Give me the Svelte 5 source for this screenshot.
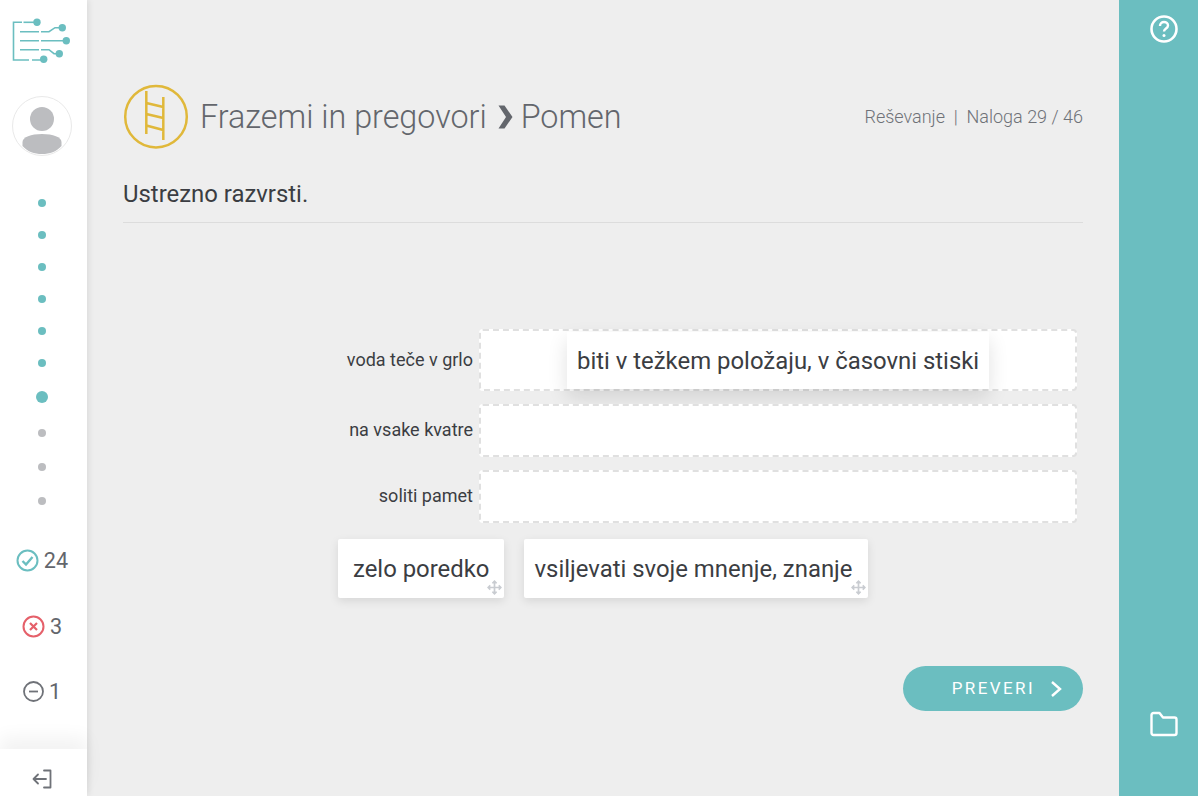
<script lang="ts">
  const doneDots = [0, 1, 2, 3, 4, 5];
  const todoDots = [0, 1, 2];
  const rows = [
    { label: "voda teče v grlo", tall: true },
    { label: "na vsake kvatre", tall: false },
    { label: "soliti pamet", tall: false },
  ];
  const chips = ["zelo poredko", "vsiljevati svoje mnenje, znanje"];
</script>

<div class="page">
  <aside class="side">
    <svg class="logo" width="60" height="46" viewBox="0 0 60 46" fill="none" stroke="#6bbec0" stroke-width="1.6">
      <path d="M12 4.300H3.500V42H19M22 42H33" />
      <path d="M13.500 4.300H27" />
      <path d="M10 13.700H29M31 13.700H39L45 9.700H52" />
      <path d="M10 22.700H29M31 22.700H56" />
      <path d="M10 31.700H29M31 31.700H39L44 35.700H49" />
      <g fill="#6bbec0" stroke="none">
        <circle cx="27" cy="4.300" r="3.700" />
        <circle cx="52.300" cy="9.700" r="3.700" />
        <circle cx="56.300" cy="22.700" r="3.700" />
        <circle cx="49.300" cy="35.700" r="3.700" />
        <circle cx="33.700" cy="41.300" r="3.700" />
      </g>
    </svg>
    <div class="avatar">
      <svg width="60" height="60" viewBox="0 0 60 60">
        <circle cx="30" cy="23" r="12" fill="#bcbdc0" />
        <path d="M10.500 46C10.500 41 19 38 30 38S49.500 41 49.500 46V50C44 56 38 58 30 58S16 56 10.500 50Z" fill="#bcbdc0" />
      </svg>
    </div>
    <div class="dots">
      {#each doneDots as d (d)}
        <span class="dot"></span>
      {/each}
      <span class="dot dot--current"></span>
      {#each todoDots as d (d)}
        <span class="dot dot--todo"></span>
      {/each}
    </div>
    <div class="stats">
      <div class="stat">
        <svg width="23" height="23" viewBox="0 0 23 23" fill="none" stroke="#6bbec0" stroke-width="2">
          <circle cx="11.500" cy="11.500" r="10" />
          <path d="M6.500 12l3.500 3.500L16.500 8" stroke-width="2.400" />
        </svg>
        <span>24</span>
      </div>
      <div class="stat">
        <svg width="23" height="23" viewBox="0 0 23 23" fill="none" stroke="#e5606a" stroke-width="2">
          <circle cx="11.500" cy="11.500" r="10" />
          <path d="M8 8l7 7M15 8l-7 7" stroke-width="2.200" />
        </svg>
        <span>3</span>
      </div>
      <div class="stat stat--last">
        <svg width="21" height="21" viewBox="0 0 21 21" fill="none" stroke="#6f7278" stroke-width="1.800">
          <circle cx="10.500" cy="10.500" r="9.500" />
          <path d="M6 10.500h9" />
        </svg>
        <span>1</span>
      </div>
    </div>
    <div class="logout">
      <svg width="22" height="22" viewBox="0 0 22 22" fill="none" stroke="#6f7278" stroke-width="1.800" stroke-linecap="round" stroke-linejoin="round">
        <path d="M13 2.500h6.500v17H13" />
        <path d="M15 11H2.500M7 6.500L2.500 11 7 15.500" />
      </svg>
    </div>
  </aside>

  <main class="main">
    <header class="head">
      <svg class="badge" width="66" height="66" viewBox="0 0 66 66" fill="none" stroke="#e0b83a" stroke-width="2.500">
        <circle cx="33" cy="32.700" r="30.800" />
        <path d="M23.300 7V50M40.300 13V56M23.300 19l17 4M23.300 30l17 4M23.300 41.500l17 4.500" />
      </svg>
      <h1 class="crumbs">
        <span>Frazemi in pregovori</span>
        <svg width="15" height="24" viewBox="0 0 15 24" fill="#63666c">
          <path d="M0.500 0.500H6.500L14.500 12 6.500 23.500H0.500L8 12Z" />
        </svg>
        <span>Pomen</span>
      </h1>
      <div class="progress">Reševanje &nbsp;|&nbsp; Naloga 29 / 46</div>
    </header>

    <h2 class="task">Ustrezno razvrsti.</h2>

    <div class="rows">
      {#each rows as row (row.label)}
        <div class="row">
          <div class="label">{row.label}</div>
          <div class="zone" class:zone--tall={row.tall}>
            {#if row.tall}
              <div class="dragged">biti v težkem položaju, v časovni stiski</div>
            {/if}
          </div>
        </div>
      {/each}
    </div>

    <div class="chips">
      {#each chips as chip (chip)}
        <div class="chip">
          {chip}
          <svg class="move" width="15" height="15" viewBox="0 0 16 16" fill="none" stroke="#c9ccd1" stroke-width="1.800">
            <path d="M8 1.500v13M1.500 8h13" />
            <path d="M5.800 3.500L8 1.300l2.200 2.200M5.800 12.500L8 14.700l2.200-2.200M3.500 5.800L1.300 8l2.200 2.200M12.500 5.800L14.700 8l-2.200 2.200" />
          </svg>
        </div>
      {/each}
    </div>

    <div class="actions">
      <button type="button" class="check">
        <span>PREVERI</span>
        <svg width="12" height="18" viewBox="0 0 12 18" fill="none" stroke="#fff" stroke-width="2.400">
          <path d="M2 2l8 7-8 7" />
        </svg>
      </button>
    </div>
  </main>

  <aside class="tools">
    <svg width="30" height="30" viewBox="0 0 30 30" fill="none" stroke="#fff" stroke-width="2.600">
      <circle cx="15" cy="15" r="12.500" />
      <path d="M11 12c0-2.500 1.800-4 4-4s4 1.500 4 3.500c0 3-4 3-4 6" stroke-width="2.400" />
      <circle cx="15" cy="21.500" r="1.500" fill="#fff" stroke="none" />
    </svg>
    <svg width="30" height="26" viewBox="0 0 30 26" fill="none" stroke="#fff" stroke-width="2.400" stroke-linejoin="round">
      <path d="M2.500 4a2 2 0 0 1 2-2h6l3.500 4.500h11.500a2 2 0 0 1 2 2V22a2 2 0 0 1-2 2h-21a2 2 0 0 1-2-2Z" />
    </svg>
  </aside>
</div>

<style>
  :global(body) {
    margin: 0;
    background: #eeeeee;
    font-family: Roboto, "Liberation Sans", sans-serif;
  }

  .page {
    display: flex;
    width: 1198px;
    height: 796px;
    overflow: hidden;
    color: #3b3d42;
  }

  .side {
    width: 87px;
    flex: none;
    background: #fff;
    box-shadow: 2px 0 6px rgba(0, 0, 0, 0.08);
    display: flex;
    flex-direction: column;
    align-items: center;
    position: relative;
    z-index: 1;
  }

  .logo {
    margin-top: 18px;
    align-self: flex-start;
    margin-left: 10px;
    flex: none;
  }

  .avatar {
    width: 60px;
    height: 60px;
    margin-top: 32px;
    border-radius: 50%;
    box-sizing: border-box;
    border: 1px solid #e9e9e9;
    overflow: hidden;
    flex: none;
    margin-left: -3px;
  }

  .avatar svg {
    display: block;
    margin: -1px;
  }

  .dots {
    margin-top: 31px;
    display: flex;
    flex-direction: column;
    align-items: center;
    margin-left: -3px;
  }

  .dot {
    width: 8px;
    height: 8px;
    margin: 12px 0;
    border-radius: 50%;
    background: #6bbec0;
  }

  .dot--current {
    width: 12px;
    height: 12px;
    margin: 12px 0 13px;
  }

  .dot--todo {
    margin: 13px 0;
    background: #bcbdc0;
  }

  .stats {
    margin-top: 29px;
    display: flex;
    flex-direction: column;
    align-items: center;
    gap: 40px;
    font-size: 21.600px;
    color: #63666c;
  }

  .stat {
    display: flex;
    align-items: center;
    gap: 5px;
    height: 26px;
    margin-left: -3px;
  }

  .stat--last {
    margin-top: -1px;
  }

  .logout {
    margin-top: auto;
    width: 100%;
    height: 47px;
    box-sizing: border-box;
    padding-bottom: 6px;
    background: #fff;
    box-shadow: 0 -12px 18px rgba(0, 0, 0, 0.05);
    display: flex;
    align-items: flex-end;
    justify-content: center;
    padding-right: 3px;
  }

  .main {
    flex: 1;
    min-width: 0;
    padding: 84px 36px 0;
    display: flex;
    flex-direction: column;
  }

  .head {
    display: flex;
    align-items: center;
    height: 66px;
  }

  .badge {
    flex: none;
  }

  .crumbs {
    margin: 0 0 0 11px;
    display: flex;
    align-items: center;
    gap: 11px;
    font-size: 32.300px;
    font-weight: 300;
    color: #63666c;
  }

  .crumbs svg {
    margin-right: -3px;
  }

  .progress {
    margin-left: auto;
    margin-bottom: 2px;
    font-size: 18px;
    font-weight: 300;
    color: #6f7278;
  }

  .task {
    margin: 29px 0 0;
    padding-bottom: 13px;
    border-bottom: 1px solid #dcdcdc;
    font-size: 23.900px;
    font-weight: 400;
    line-height: 30px;
  }

  .rows {
    margin-top: 106px;
    display: flex;
    flex-direction: column;
    gap: 13px;
  }

  .row {
    display: flex;
    align-items: center;
    gap: 6px;
  }

  .label {
    width: 350px;
    padding-bottom: 2px;
    text-align: right;
    font-size: 18px;
  }

  .zone {
    width: 598px;
    height: 53px;
    box-sizing: border-box;
    background: #fff;
    border: 2px dashed #e0e0e0;
    border-radius: 4px;
    position: relative;
  }

  .zone--tall {
    height: 62px;
  }

  .dragged {
    position: absolute;
    left: 86px;
    top: 1px;
    height: 57px;
    padding: 0 10px;
    display: flex;
    align-items: center;
    background: #fff;
    font-size: 23.900px;
    white-space: nowrap;
    box-shadow: 0 8px 20px rgba(0, 0, 0, 0.12);
  }

  .chips {
    margin-top: 16px;
    margin-left: 215px;
    display: flex;
    gap: 20px;
  }

  .chip {
    position: relative;
    height: 59px;
    padding: 0 15px;
    display: flex;
    align-items: center;
    background: #fff;
    border-radius: 2px;
    font-size: 23.900px;
    white-space: nowrap;
    box-shadow: 0 3px 10px rgba(0, 0, 0, 0.1);
  }

  .chip:nth-child(2) {
    padding: 0 16px 0 10px;
  }

  .move {
    position: absolute;
    right: 2px;
    bottom: 3px;
  }

  .actions {
    margin-top: 68px;
    display: flex;
    justify-content: flex-end;
  }

  .check {
    width: 180px;
    height: 45px;
    border: none;
    border-radius: 23px;
    background: #6bbec0;
    color: #fff;
    font-family: inherit;
    font-size: 17px;
    letter-spacing: 2.400px;
    display: flex;
    align-items: center;
    justify-content: flex-end;
    gap: 15px;
    padding: 0 21px 0 0;
  }

  .check span {
    padding-bottom: 2px;
  }

  .tools {
    width: 79px;
    flex: none;
    background: #6bbec0;
    display: flex;
    flex-direction: column;
    align-items: center;
    justify-content: space-between;
    padding: 14px 0 59px 11px;
    box-sizing: border-box;
  }
</style>
